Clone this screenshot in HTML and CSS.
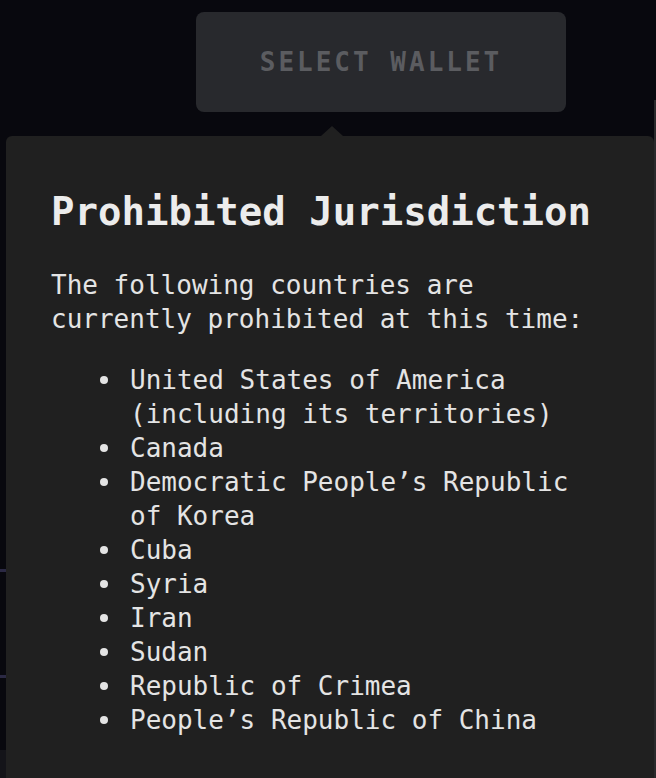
FILE: index.html
```html
<!DOCTYPE html>
<html lang="en">
<head>
<meta charset="utf-8">
<title>Prohibited Jurisdiction</title>
<link rel="stylesheet" href="styles.css">
</head>
<body>
<div class="page">
  <header class="topbar">
    <button class="wallet-btn" type="button">SELECT WALLET</button>
  </header>
  <main class="content">
    <div class="row row-a"></div>
    <div class="row row-b"></div>
    <div class="row row-c"></div>
    <div class="row row-d"></div>
  </main>
  <div class="edge"></div>

  <div class="tooltip" role="tooltip">
    <span class="tip-arrow"></span>
    <h2 class="tip-title">Prohibited Jurisdiction</h2>
    <p class="tip-text">The following countries are currently prohibited at this time:</p>
    <ul class="tip-list">
      <li>United States of America (including its territories)</li>
      <li>Canada</li>
      <li>Democratic People’s Republic of Korea</li>
      <li>Cuba</li>
      <li>Syria</li>
      <li>Iran</li>
      <li>Sudan</li>
      <li>Republic of Crimea</li>
      <li>People’s Republic of China</li>
    </ul>
  </div>
</div>
</body>
</html>
```

FILE: styles.css
```css
html, body {
  margin: 0;
  padding: 0;
  background: #08080e;
}

body {
  width: 656px;
  height: 778px;
  overflow: hidden;
  font-family: "DejaVu Sans Mono", "Liberation Mono", monospace;
}

.page {
  position: relative;
  width: 656px;
  height: 778px;
  display: flex;
  flex-direction: column;
}

.topbar {
  height: 136px;
  display: flex;
  align-items: flex-start;
  padding: 12px 0 0 196px;
  box-sizing: border-box;
}

.wallet-btn {
  width: 370px;
  height: 100px;
  border: 0;
  border-radius: 8px;
  background: #28292d;
  color: #5b5c60;
  font-family: "DejaVu Sans Mono", "Liberation Mono", monospace;
  font-weight: bold;
  font-size: 26px;
  letter-spacing: 3px;
  padding: 0;
  display: flex;
  align-items: center;
  justify-content: center;
}

.content {
  flex: 1;
  display: flex;
  flex-direction: column;
}

.row-a {
  height: 433px;
  border-bottom: 3px solid #2b2944;
}

.row-b {
  height: 103px;
  border-bottom: 3px solid #2b2944;
}

.row-c {
  height: 72px;
}

.row-d {
  flex: 1;
  background: #141419;
}

.edge {
  position: absolute;
  top: 100px;
  right: 0;
  width: 2px;
  bottom: 0;
  background: #2a2a2c;
}

.tooltip {
  position: absolute;
  left: 6px;
  top: 136px;
  width: 648px;
  height: 680px;
  box-sizing: border-box;
  background: #202020;
  border-radius: 6px;
  padding: 52px 20px 0 45px;
  color: #e4e4e4;
}

.tip-arrow {
  position: absolute;
  top: -10px;
  left: 315px;
  width: 0;
  height: 0;
  border-left: 11px solid transparent;
  border-right: 11px solid transparent;
  border-bottom: 10px solid #202020;
}

.tip-title {
  margin: 0;
  font-size: 39px;
  line-height: 47px;
  font-weight: bold;
  color: #ececec;
}

.tip-text {
  margin: 33px 0 0 0;
  font-size: 26px;
  line-height: 34px;
  max-width: 560px;
}

.tip-list {
  list-style: none;
  margin: 27px 0 0 0;
  padding: 0 0 0 49px;
  font-size: 26px;
  line-height: 34px;
  max-width: 480px;
}

.tip-list li {
  display: grid;
  grid-template-columns: 30px 1fr;
  align-items: start;
}

.tip-list li::before {
  content: "";
  width: 8px;
  height: 8px;
  margin-top: 13px;
  border-radius: 50%;
  background: #e4e4e4;
}
```
